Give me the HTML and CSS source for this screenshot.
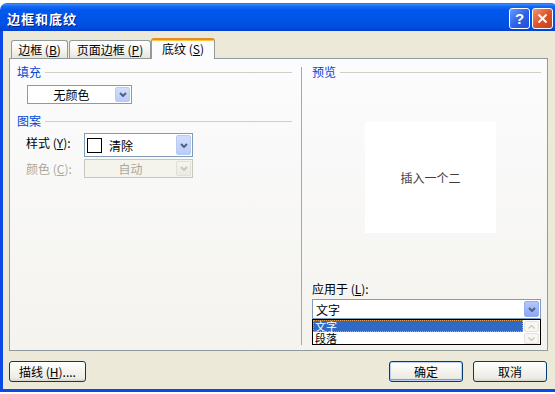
FILE: index.html
```html
<!DOCTYPE html>
<html lang="zh-CN">
<head>
    <meta charset="UTF-8" />
    <title>边框和底纹</title>
    <link rel="stylesheet" href="styles.css">
</head>
<body>
<div class="doc-strip"></div>

<div class="window">
    <div class="titlebar">
        <span class="title">边框和底纹</span>
        <div class="caption-btns">
            <button class="cap-btn help">?</button>
            <button class="cap-btn close">
                <svg width="11" height="11" viewBox="0 0 11 11"><path d="M1.5 1.5l8 8M9.5 1.5l-8 8" stroke="#fff" stroke-width="2" fill="none"/></svg>
            </button>
        </div>
    </div>

    <div class="client">
        <div class="tabs">
            <div class="tab">边框 (<u>B</u>)</div>
            <div class="tab">页面边框 (<u>P</u>)</div>
            <div class="tab active">底纹 (<u>S</u>)</div>
        </div>

        <div class="panel">
            <div class="col left">
                <div class="group-title"><span>填充</span><i></i></div>
                <div class="combo fill">
                    <span class="combo-text">无颜色</span>
                    <span class="drop"><svg width="8" height="5" viewBox="0 0 8 5"><path d="M1 1l3 3 3-3" fill="none" stroke="#4d6185" stroke-width="2"/></svg></span>
                </div>

                <div class="group-title pattern"><span>图案</span><i></i></div>
                <div class="field">
                    <label>样式 (<u>Y</u>):</label>
                    <div class="combo style">
                        <span class="swatch"></span>
                        <span>清除</span>
                        <span class="drop"><svg width="8" height="5" viewBox="0 0 8 5"><path d="M1 1l3 3 3-3" fill="none" stroke="#4d6185" stroke-width="2"/></svg></span>
                    </div>
                </div>
                <div class="field disabled">
                    <label>颜色 (<u>C</u>):</label>
                    <div class="combo color">
                        <span class="combo-text">自动</span>
                        <span class="drop"><svg width="8" height="5" viewBox="0 0 8 5"><path d="M1 1l3 3 3-3" fill="none" stroke="#c9c7ba" stroke-width="2"/></svg></span>
                    </div>
                </div>
            </div>

            <div class="sep"></div>

            <div class="col right">
                <div class="group-title"><span>预览</span><i></i></div>
                <div class="preview"><span>插入一个二</span></div>
                <label class="apply-label">应用于 (<u>L</u>):</label>
                <div class="apply">
                    <div class="combo apply-combo">
                        <span>文字</span>
                        <span class="drop hot"><svg width="8" height="5" viewBox="0 0 8 5"><path d="M1 1l3 3 3-3" fill="none" stroke="#4d6185" stroke-width="2"/></svg></span>
                    </div>
                    <!-- 展开的下拉列表 -->
                    <div class="droplist">
                        <ul>
                            <li class="selected">文字</li>
                            <li>段落</li>
                        </ul>
                        <div class="scroll">
                            <span class="sbtn"><svg width="7" height="4" viewBox="0 0 7 4"><path d="M0.5 3.5l3-3 3 3" fill="none" stroke="#cac8bb" stroke-width="1.2"/></svg></span>
                            <span class="sbtn"><svg width="7" height="4" viewBox="0 0 7 4"><path d="M0.5 0.5l3 3 3-3" fill="none" stroke="#cac8bb" stroke-width="1.2"/></svg></span>
                        </div>
                    </div>
                </div>
            </div>
        </div>

        <div class="footer">
            <button class="btn">描线 (<u>H</u>)....</button>
            <span class="spacer"></span>
            <button class="btn default">确定</button>
            <button class="btn">取消</button>
        </div>
    </div>
</div>

<div class="doc-strip bottom"></div>
</body>
</html>
```

FILE: styles.css
```css
* { box-sizing: border-box; }
body {
    margin: 0;
    width: 555px;
    height: 394px;
    overflow: hidden;
    background: #fff;
    font-family: "Noto Sans CJK SC", "Liberation Sans", sans-serif;
    font-size: 12px;
    color: #000;
}
u { text-decoration: underline; text-underline-offset: 1px; }

.doc-strip { height: 3px; background: #fff; }
.doc-strip.bottom { height: 2px; }

.window {
    width: 558px;
    height: 389px;
    display: flex;
    flex-direction: column;
}

/* 标题栏 */
.titlebar {
    height: 28px;
    flex: none;
    display: flex;
    align-items: center;
    justify-content: space-between;
    padding: 3px 5px 0 7px;
    border-radius: 7px 7px 0 0;
    background: linear-gradient(#0a5de8 0, #3d8cff 1px, #1a6cf4 3px, #0058ee 7px, #0055e8 50%, #004fdf 85%, #0040cf 100%);
}
.title {
    color: #fff;
    font-weight: bold;
    font-size: 13px;
    letter-spacing: 1px;
    text-shadow: 1px 1px 0 #0a1883;
}
.caption-btns { display: flex; gap: 2px; }
.cap-btn {
    width: 21px;
    height: 21px;
    padding: 0;
    border: 1px solid #fff;
    border-radius: 3px;
    display: flex;
    align-items: center;
    justify-content: center;
    color: #fff;
}
.help {
    background: linear-gradient(135deg, #6c9bff, #2a5fe6 55%, #1d4fd8);
    font: bold 15px "Liberation Sans", sans-serif;
}
.close {
    background: linear-gradient(135deg, #f0946f, #d9502a 55%, #c6401b);
}

/* 客户区 */
.client {
    flex: 1;
    display: flex;
    flex-direction: column;
    background: #ece9d8;
    border: 3px solid #0b48e6;
    border-top: none;
    padding: 7px 0 0 6px;
}

.tabs {
    display: flex;
    align-items: flex-end;
    height: 20px;
    padding-left: 2px;
    position: relative;
    z-index: 1;
}
.tab {
    height: 18px;
    line-height: 17px;
    text-align: center;
    white-space: nowrap;
    border: 1px solid #919b9c;
    border-bottom: none;
    border-radius: 3px 3px 0 0;
    background: linear-gradient(#fff, #f5f4f0 55%, #e6e4da);
}
.tab:nth-child(1) { width: 57px; margin-right: 1px; }
.tab:nth-child(2) { width: 82px; }
.tab.active {
    width: 64px;
    height: 21px;
    line-height: 18px;
    margin-bottom: -1px;
    background: #fcfcfe;
    border-top: 2px solid #e68b2c;
    box-shadow: inset 0 1px 0 #ffc73c;
}

.panel {
    width: 539px;
    height: 293px;
    display: flex;
    border: 1px solid #919b9c;
    background: linear-gradient(#fcfcfe, #f4f3ee);
}
.col { padding-top: 6px; }
.left { width: 291px; padding-right: 9px; padding-left: 7px; }
.right { flex: 1; padding-right: 6px; padding-left: 10px; }
.sep { width: 1px; margin: 8px 0 5px; background: #aca899; }

.group-title {
    display: flex;
    align-items: center;
    gap: 4px;
    height: 13px;
    line-height: 13px;
    color: #0046d5;
}
.group-title i { flex: 1; height: 1px; margin-top: 2px; background: #d0d0bf; }
.group-title.pattern { margin-top: 10px; }

.combo {
    position: relative;
    display: flex;
    align-items: center;
    height: 19px;
    border: 1px solid #7f9db9;
    background: #fff;
}
.combo .drop {
    position: absolute;
    right: 1px;
    top: 1px;
    bottom: 1px;
    width: 15px;
    display: flex;
    align-items: center;
    justify-content: center;
    border: 1px solid #b9cbf3;
    border-radius: 2px;
    background: linear-gradient(#d2defd, #b9ccf8);
}
.combo .drop.hot {
    border-color: #97aef2;
    background: linear-gradient(#b4c6fb, #8ea6f3);
}
.combo-text { flex: 1; text-align: center; padding-right: 16px; }

.fill { width: 105px; margin: 7px 0 0 10px; }

.field { display: flex; align-items: center; margin-left: 9px; white-space: nowrap; }
.field label { width: 58px; }
.style { width: 109px; height: 24px; margin-top: 6px; }
.swatch {
    width: 15px;
    height: 15px;
    margin: 0 7px 0 2px;
    border: 1px solid #000;
    background: #fff;
}
.field.disabled { margin-top: 2px; }
.field.disabled label { color: #aca899; }
.color { width: 109px; border-color: #c9c7ba; background: #f4f3ec; color: #aca899; }
.color .drop { border-color: #e2e0d6; background: linear-gradient(#f6f5f0, #ebe9e1); }

.preview {
    width: 131px;
    height: 111px;
    margin: 44px 0 0 53px;
    display: flex;
    align-items: center;
    justify-content: center;
    background: #fff;
    color: #404040;
}
.apply-label { display: block; margin-top: 49px; line-height: 13px; }
.apply { position: relative; margin-top: 4px; }
.apply-combo { height: 20px; padding-left: 3px; }

.droplist {
    position: absolute;
    left: 0;
    top: 100%;
    width: 100%;
    height: 26px;
    display: flex;
    border: 1px solid #000;
    background: #fff;
}
.droplist ul { flex: 1; list-style: none; margin: 0; padding: 0; }
.droplist li { height: 12px; line-height: 12px; font-size: 11px; padding-left: 2px; }
.droplist li.selected {
    background: #316ac5;
    color: #fff;
    outline: 1px dotted #e6a04a;
    outline-offset: -1px;
}
.scroll { width: 17px; display: flex; flex-direction: column; gap: 1px; padding: 1px 1px 0 1px; }
.sbtn {
    height: 11px;
    display: flex;
    align-items: center;
    justify-content: center;
    border: 1px solid #e4e2d9;
    border-radius: 2px;
    background: #f7f6f2;
}

/* 底部按钮 */
.footer {
    display: flex;
    margin-top: 10px;
    padding-right: 8px;
    gap: 10px;
}
.spacer { flex: 1; }
.btn {
    width: 74px;
    height: 21px;
    padding: 0;
    font: inherit;
    color: #000;
    white-space: nowrap;
    border: 1px solid #003c74;
    border-radius: 3px;
    background: linear-gradient(#fff, #f6f5f0 40%, #ecebe4 85%, #d8d4c8);
}
.btn:first-child { width: 77px; }
.btn.default { box-shadow: inset 0 0 0 1px #bcd2f7, inset 0 -1px 0 1px #7d97ea; }
```
